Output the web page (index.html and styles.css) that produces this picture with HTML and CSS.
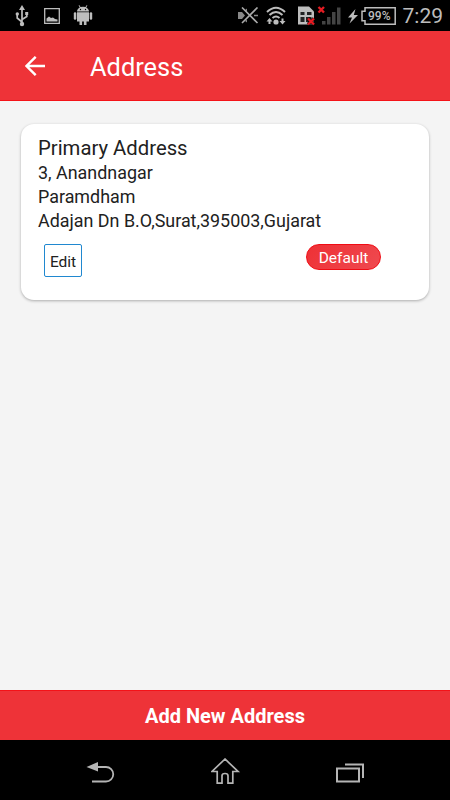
FILE: index.html
```html
<!DOCTYPE html>
<html lang="en">
    <head>
        <meta charset="utf-8">
        <meta name="viewport" content="width=device-width, initial-scale=1">
        <title>Address</title>
        <link rel="stylesheet" href="styles.css">
    </head>

    <body>

        <div class="statusBar">
            <div class="statusLeft">
                <!-- usb -->
                <svg width="14" height="24" viewBox="0 0 14 24" fill="none" stroke="#bdbdbd" stroke-width="1.700">
                    <path d="M7 4v16M7 18L2.200 14v-4M7 15.500l4.800-3V9"/>
                    <path d="M7 1l3 5H4z" fill="#bdbdbd" stroke="none"/>
                    <circle cx="7" cy="20" r="2.200" fill="#bdbdbd" stroke="none"/>
                    <circle cx="2.300" cy="10" r="1.700" fill="#bdbdbd" stroke="none"/>
                    <path d="M10.200 8h3v3h-3z" fill="#bdbdbd" stroke="none"/>
                </svg>
                <!-- picture -->
                <svg class="picture" width="16" height="16" viewBox="0 0 16 16">
                    <path d="M.7.7h14.600v14.600H.7z" fill="none" stroke="#bdbdbd" stroke-width="1.300"/>
                    <path d="M2.500 13.500V10.500l2.500-2 2 1.500 2-.5 2 1.500 2.500.5v2z" fill="#bdbdbd"/>
                </svg>
                <!-- android -->
                <svg width="20" height="21" viewBox="0 0 20 21" fill="#bdbdbd">
                    <path d="M4 6.500C4 4.600 5.200 3.200 6.800 2.400L5.600.4l.6-.3L7.500 2.100a8 8 0 0 1 5 0L13.800.1l.6.3-1.200 2C14.800 3.200 16 4.600 16 6.500z"/>
                    <path d="M4 7.300h12v9.200H13.500V20h-2.600v-3.500H9.100V20H6.500v-3.500H4z"/>
                    <rect x=".8" y="7.200" width="2.500" height="7.500" rx="1.200"/>
                    <rect x="16.700" y="7.200" width="2.500" height="7.500" rx="1.200"/>
                    <circle cx="7.500" cy="4.500" r=".7" fill="#000"/>
                    <circle cx="12.500" cy="4.500" r=".7" fill="#000"/>
                </svg>
            </div>
            <div class="statusRight">
                <!-- muted -->
                <svg width="21" height="18" viewBox="238 8 21 18">
                    <path d="M238 13h4l3 3.500-3 3.500h-4zM247 9.500v3l-2-1.500zM247 23.500v-3l-2 1.500z" fill="#888"/>
                    <path d="M242 8.500l15.500 15.500M257.500 8.500L242 24" stroke="#aaa" stroke-width="1.600"/>
                    <path d="M254 16.500h4" stroke="#888" stroke-width="1.500"/>
                </svg>
                <!-- wifi -->
                <svg class="wifi" width="20" height="20" viewBox="266 6 20 20" fill="none" stroke="#bdbdbd" stroke-width="2">
                    <path d="M267 12q9-8.500 18 0M269.500 15q6.500-6 13 0M272.500 18q3.500-3 7 0"/>
                    <circle cx="276" cy="22" r="2.600" fill="#bdbdbd" stroke="none"/>
                    <path d="M269.500 18l3 3.500h-2v2.500h-2v-2.500h-2zM282.500 24.500l-3-3.500h2v-2.500h2v2.500h2z" fill="#bdbdbd" stroke="none"/>
                </svg>
                <!-- sim card error and signal -->
                <svg class="signal" width="44" height="22" viewBox="298 5 44 22">
                    <path d="M298 6.500h11l5 5v13h-16z" fill="#bdbdbd"/>
                    <path d="M300.500 12h4v3h-4zM307 12h4.500v3H307zM300.500 17h4v5h-4zM306 17h5.500v5H306z" fill="#222"/>
                    <path d="M308 18.500l6 6M314 18.500l-6 6" stroke="#000" stroke-width="3.500"/>
                    <path d="M308 18.500l6 6M314 18.500l-6 6M318.500 7l5.500 5.500M324 7l-5.500 5.500" stroke="#e51c23" stroke-width="2.400"/>
                    <path d="M322 21h3.500v3.500H322zM327 17h3.500v7.500H327zM332 12h3.500v12.500H332zM337 7.500h3.500v17H337z" fill="#444"/>
                </svg>
                <!-- charging battery -->
                <svg width="49" height="20" viewBox="348 6 49 20">
                    <path d="M355.500 9L348 17.500h4l-2.500 6L358 15h-4.200z" fill="#bdbdbd"/>
                    <path d="M365 7.800h30.200v16.500H365v-3.500h-3v-9.500h3z" fill="none" stroke="#bdbdbd" stroke-width="1.500"/>
                    <text class="batteryText" x="368" y="20">99%</text>
                </svg>
                <span class="clock">7:29</span>
            </div>
        </div>

        <div class="header">
            <svg class="back" width="20" height="20" viewBox="0 0 20 20" fill="none" stroke="#fff" stroke-width="2.400">
                <path d="M20 10H1.800M10.700.8L1.500 10l9.200 9.200"/>
            </svg>
            <h1 class="title">Address</h1>
        </div>

        <div class="content">
            <div class="card">
                <h2 class="cardTitle">Primary Address</h2>
                <p class="line">3, Anandnagar</p>
                <p class="line">Paramdham</p>
                <p class="line">Adajan Dn B.O,Surat,395003,Gujarat</p>
                <div class="actions">
                    <button class="editButton">Edit</button>
                    <span class="badge">Default</span>
                </div>
            </div>
        </div>

        <button class="addButton">Add New Address</button>

        <div class="navBar">
            <svg width="30" height="24" viewBox="86 760 30 24">
                <path d="M92 781.500h14a7 7 0 0 0 0-14.500H97" fill="none" stroke="#b5b5b5" stroke-width="1.800"/>
                <path d="M86.500 767l11.500-5v9.500z" fill="#b5b5b5"/>
            </svg>
            <svg width="30" height="28" viewBox="211 757 30 28" fill="none" stroke="#b5b5b5" stroke-width="1.700">
                <path d="M225 758L212 770.500h5.200v11.700h4.800v-7.500q0-2.200 3-2.200t3 2.200v7.500h4.800v-11.700h5.200z"/>
            </svg>
            <svg width="30" height="22" viewBox="335 761 30 22" fill="none" stroke="#b5b5b5" stroke-width="2">
                <path d="M337 768.500h22v13h-22zM345 764.500h18V778"/>
            </svg>
        </div>

    </body>
</html>
```
FILE: styles.css
```css
* {
    box-sizing: border-box;
}

body {
    margin: 0;
    height: 800px;
    display: flex;
    flex-direction: column;
    background-color: #f4f4f4;
    font-family: Roboto, "Liberation Sans", sans-serif;
    color: #212121;
}

svg {
    display: block;
    flex: none;
}

h1, h2, p {
    margin: 0;
    font-weight: 400;
}

button {
    font-family: inherit;
}

.statusBar {
    height: 31px;
    padding: 0 7px 0 15px;
    display: flex;
    justify-content: space-between;
    background-color: #000;
}

.statusLeft,
.statusRight {
    display: flex;
    align-items: center;
}

.picture {
    margin: 0 13px 0 15px;
}

.wifi {
    margin: 0 12px 0 7px;
}

.signal {
    margin-right: 6px;
}

.batteryText {
    font-size: 12px;
    font-weight: 500;
    fill: #bdbdbd;
}

.clock {
    margin-left: 6px;
    padding-top: 2px;
    font-size: 21px;
    line-height: 29px;
    color: #bdbdbd;
}

.header {
    height: 70px;
    padding-left: 25px;
    display: flex;
    align-items: center;
    background-color: #ee3338;
    border-bottom: 1px solid #f41218;
}

.title {
    margin-left: 45px;
    padding-top: 2px;
    font-size: 25.4px;
    color: #fff;
}

.content {
    flex: 1;
    padding: 23px 21px;
}

.card {
    height: 176px;
    padding: 12px 17px;
    background-color: #fff;
    border-radius: 13px;
    box-shadow: 0 1px 3px rgba(0, 0, 0, 0.3);
}

.cardTitle {
    font-size: 20.3px;
    line-height: 25px;
}

.line {
    font-size: 17.9px;
    line-height: 24px;
}

.actions {
    display: flex;
    justify-content: space-between;
    align-items: flex-start;
    padding: 11px 31px 0 6px;
}

.editButton {
    width: 38px;
    height: 33px;
    padding: 2px 0 0;
    background-color: #fff;
    border: 1px solid #2088d0;
    border-radius: 2px;
    font-size: 15.5px;
    color: #212121;
}

.badge {
    width: 75px;
    height: 26px;
    border: 1px solid #f00c14;
    border-radius: 13px;
    background: linear-gradient(135deg, #ee3035, #ef4a50);
    font-size: 15.5px;
    line-height: 26px;
    text-align: center;
    color: #fff;
}

.addButton {
    height: 50px;
    padding: 0;
    border: none;
    border-top: 1px solid #f41218;
    background-color: #ee3338;
    font-size: 20px;
    font-weight: 700;
    color: #fff;
}

.navBar {
    height: 60px;
    padding: 3px 85px 0 86px;
    display: flex;
    justify-content: space-between;
    align-items: center;
    background-color: #000;
}
```
